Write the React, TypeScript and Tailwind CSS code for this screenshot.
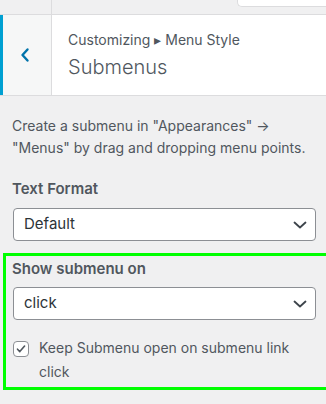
function Chevron() {
  return (
    <svg width="14" height="8" viewBox="0 0 14 8" className="text-[#3c434a]">
      <path d="M1.5 1.5L7 6.5l5.5-5" fill="none" stroke="currentColor" strokeWidth="1.8" strokeLinecap="round" strokeLinejoin="round" />
    </svg>
  )
}

function SelectBox({ value }: { value: string }) {
  return (
    <div className="flex h-[33px] w-[303px] items-center justify-between rounded-[4px] border border-[#8c8f94] bg-white pl-[10px] pr-[8px] text-[15px] text-[#2c3338]">
      <span>{value}</span>
      <Chevron />
    </div>
  )
}

export default function App() {
  return (
    <div className="h-[404px] w-[326px] overflow-hidden bg-[#f0f0f1] font-['Inter',sans-serif] text-[#50575e]">
      <div className="flex h-[15px] border-b border-[#dcdcde]">
        <div className="w-[52px] border-r border-[#dcdcde]" />
        <div className="flex flex-1 justify-end">
          <div className="h-[7px] w-[89px] rounded-bl-[5px] border-b border-l border-[#dcdcde] bg-white" />
        </div>
      </div>

      <div className="flex h-[81px] border-b border-[#dcdcde] bg-white">
        <button
          type="button"
          className="flex w-[52px] items-center border-l-[3px] border-r border-l-[#00a0d2] border-r-[#dcdcde] bg-[#f6f7f7] pl-[17px] pb-px text-[#0073aa]"
        >
          <svg width="10" height="16" viewBox="0 0 10 16">
            <path d="M7.5 2.5L2.5 8l5 5.5" fill="none" stroke="currentColor" strokeWidth="2.4" strokeLinecap="round" strokeLinejoin="round" />
          </svg>
        </button>
        <div className="pl-[16px] pt-[15px]">
          <div className="text-[14px] leading-[20px]">Customizing ▸ Menu Style</div>
          <div className="mt-[4px] text-[20px] font-light leading-[26px]">Submenus</div>
        </div>
      </div>

      <div className="px-[12px] pt-[19px]">
        <p className="whitespace-nowrap text-[14px] leading-[22px]">
          Create a submenu in "Appearances" →
          <br />
          "Menus" by drag and dropping menu points.
        </p>

        <div className="mt-[19px] text-[15px] font-semibold leading-[22px]">Text Format</div>
        <div className="mt-[8px] pl-px">
          <SelectBox value="Default" />
        </div>
      </div>

      <div className="ml-[3px] mt-[12px] w-[340px] border-[3px] border-[#00ff00] pb-[3px] pl-[6px] pt-[2px]">
        <div className="text-[15px] font-semibold leading-[22px]">Show submenu on</div>
        <div className="mt-[7px] pl-px">
          <SelectBox value="click" />
        </div>
        <div className="mt-[16px] flex items-start gap-[10px]">
          <span className="ml-px mt-[5px] flex h-[16px] w-[16px] shrink-0 items-center justify-center rounded-[4px] border border-[#8c8f94] bg-white">
            <svg width="12" height="12" viewBox="0 0 12 12">
              <path d="M2.5 6.2l2.3 2.4L9.6 3" fill="none" stroke="#50575e" strokeWidth="1.6" strokeLinecap="round" strokeLinejoin="round" />
            </svg>
          </span>
          <span className="w-[256px] text-[14px] leading-[24px]">Keep Submenu open on submenu link click</span>
        </div>
      </div>
    </div>
  )
}
